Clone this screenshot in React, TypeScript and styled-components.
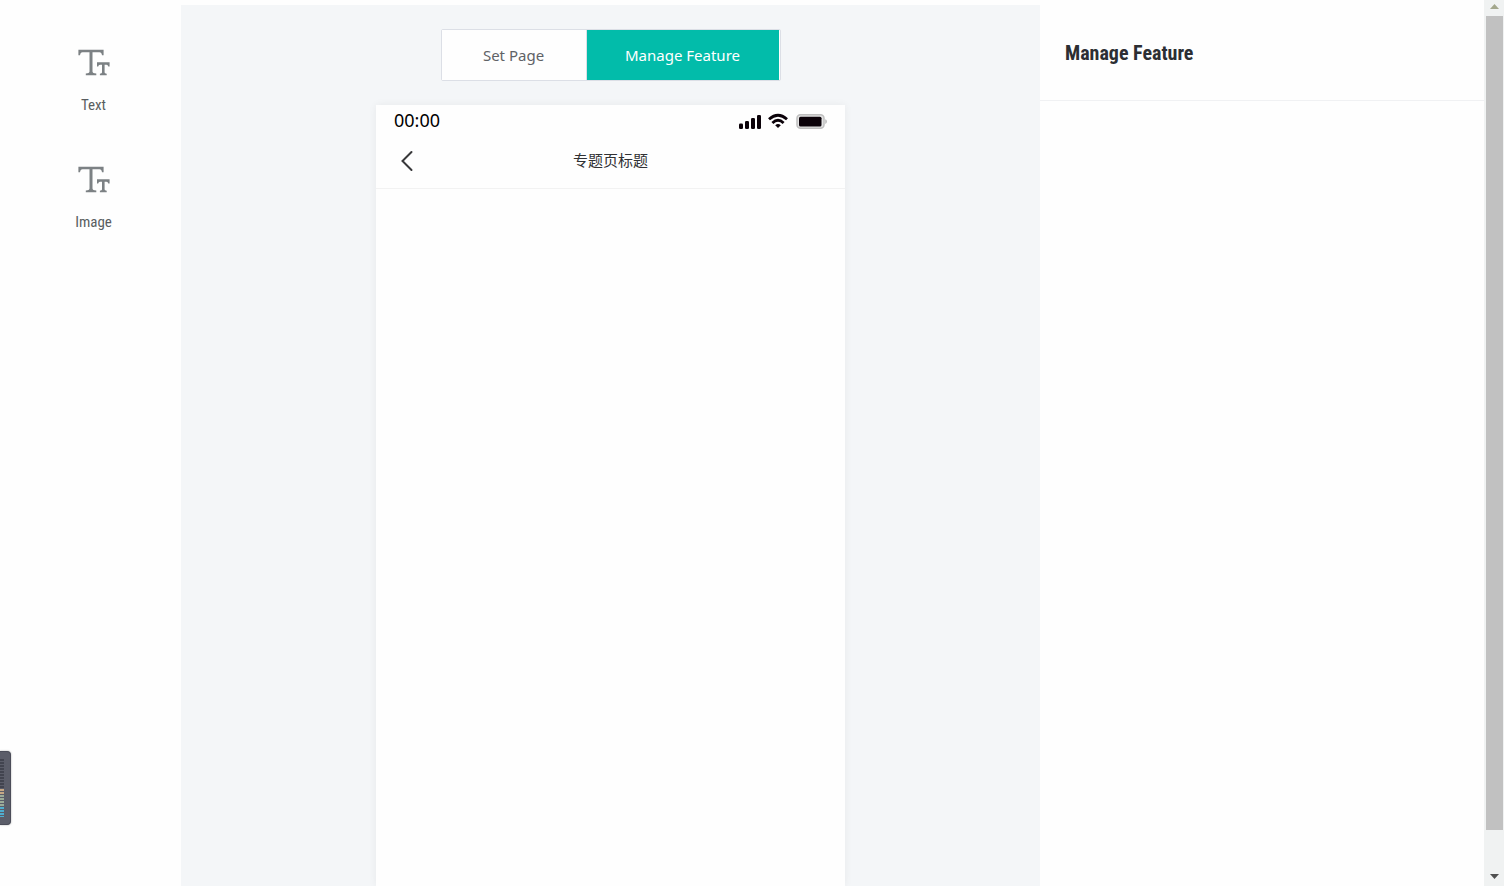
import React from "react";
import styled, { createGlobalStyle } from "styled-components";

const GlobalStyle = createGlobalStyle`
  *, *::before, *::after { box-sizing: border-box; }
  body {
    margin: 0;
    background: #fefefe;
    color: #333;
    font-family: "Noto Sans", "Open Sans", "Noto Sans CJK SC", sans-serif;
  }
  button { font: inherit; border: 0; padding: 0; background: none; cursor: pointer; }
`;

const condensed = `"Roboto Condensed", Roboto, sans-serif`;

const Page = styled.div`
  display: flex;
  height: 100vh;
  overflow: hidden;
`;

const Toolbox = styled.nav`
  flex: 0 0 181px;
  display: flex;
  flex-direction: column;
  align-items: center;
  gap: 50px;
  padding: 48px 0 0 6px;
`;

const Tool = styled.button`
  display: flex;
  flex-direction: column;
  align-items: center;
  gap: 18px;
  width: 48px;
  color: #595d60;
  font-family: ${condensed};
  font-size: 15px;
  line-height: 20px;
`;

const Canvas = styled.main`
  flex: 1;
  display: flex;
  flex-direction: column;
  align-items: center;
  gap: 24px;
  margin-top: 5px;
  padding-top: 24px;
  background: #f4f6f8;
`;

const Tabs = styled.div`
  display: flex;
  height: 52px;
  flex: none;
  padding-right: 1px;
  border: 1px solid #dcdfe6;
  border-radius: 2px;
  background: #fefefe;
`;

const Tab = styled.button<{ $active?: boolean }>`
  width: ${(p) => (p.$active ? 193 : 144)}px;
  border-left: ${(p) => (p.$active ? "1px solid #dcdfe6" : "0")};
  background: ${(p) => (p.$active ? "#02bcaa" : "#fefefe")};
  color: ${(p) => (p.$active ? "#fff" : "#606266")};
  font-size: 15px;
  line-height: 20px;
`;

const Phone = styled.section`
  display: flex;
  flex-direction: column;
  flex: 1;
  width: 469px;
  background: #fefefe;
  box-shadow: 0 0 8px rgba(0, 0, 0, 0.06);
`;

const StatusBar = styled.div`
  display: flex;
  justify-content: space-between;
  align-items: center;
  height: 32px;
  padding: 0 18px;
`;

const Clock = styled.time`
  padding-bottom: 2px;
  color: #000;
  font-size: 18px;
  line-height: 24px;
`;

const PhoneHeader = styled.header`
  display: grid;
  grid-template-columns: 62px 1fr 62px;
  align-items: center;
  height: 52px;
  padding-bottom: 4px;
  border-bottom: 1px solid #f2f2f2;
`;

const BackButton = styled.button`
  display: flex;
  justify-content: center;
`;

const PhoneTitle = styled.h1`
  margin: 0;
  padding-bottom: 2px;
  color: #303133;
  font-family: "Noto Sans CJK SC", sans-serif;
  font-size: 15px;
  font-weight: 400;
  line-height: 20px;
  text-align: center;
`;

const Settings = styled.aside`
  flex: 0 0 444px;
`;

const SettingsTitle = styled.h2`
  margin: 0;
  padding: 40px 25px 34px;
  border-bottom: 1px solid #f0f1f3;
  color: #2c2e33;
  font-family: ${condensed};
  font-size: 20px;
  font-weight: 700;
  line-height: 26px;
`;

const ScrollTrack = styled.div`
  flex: 0 0 20px;
  display: flex;
  flex-direction: column;
  padding: 0 1px 0 2px;
  background: #f0f2f2;
`;

const ScrollArrow = styled.button`
  display: flex;
  justify-content: center;
  align-items: flex-start;
  height: 16px;
  padding-top: 4px;
`;

const ScrollThumb = styled.div`
  flex: 0 1 814px;
  background: #c1c1c1;
`;

const ScrollSpace = styled.div`
  flex: 1 0 36px;
`;

const Meter = styled.div`
  position: fixed;
  left: 0;
  bottom: 61px;
  width: 11px;
  height: 74px;
  border: 1px solid #4b4d59;
  border-left: 0;
  border-radius: 0 4px 4px 0;
  background: #5b5d69;
  box-shadow: 0 0 2px rgba(0, 0, 0, 0.35);
`;

const MeterScale = styled.div`
  padding-top: 7px;
  line-height: 0;
`;

const TextIcon = () => (
  <svg width="32" height="29" viewBox="0 0 32 29" fill="#7c8184" aria-hidden="true">
    <path d="M0.400 1.800H25.600V7.200H24Q23.600 4.200 21.500 4.200H14.500V23.500Q14.500 25.300 18.300 25.500V27.200H7.800V25.500Q11.500 25.300 11.500 23.500V4.200H4.500Q2.400 4.200 2 7.200H0.400Z" />
    <path d="M19 14.200H31.600V18.500H30.300Q30 16.700 28.500 16.700H26.600V24.500Q26.600 25.600 28.700 25.800V27.200H21.900V25.800Q24 25.600 24 24.500V16.700H22Q20.500 16.700 20.200 18.500H19Z" />
  </svg>
);

const StatusIcons = () => (
  <svg width="90" height="18" viewBox="0 0 90 18" aria-hidden="true">
    <g fill="#0b0209">
      <rect x="2" y="11.500" width="4" height="5.500" rx="1.300" />
      <rect x="8" y="9" width="4" height="8" rx="1.300" />
      <rect x="14" y="6" width="4" height="11" rx="1.300" />
      <rect x="20" y="3" width="4" height="14" rx="1.300" />
    </g>
    <g fill="none" stroke="#0b0209" strokeWidth="2.800">
      <path d="M32 7.200Q41 -0.800 50 7.200" />
      <path d="M35.400 11Q41 5.600 46.600 11" />
    </g>
    <path d="M38.200 13.200Q41 11 43.800 13.200L41 16Z" fill="#0b0209" />
    <rect x="60" y="2.800" width="27" height="13.500" rx="3.500" fill="#e4e4e4" stroke="#bebebe" strokeWidth="1.500" />
    <rect x="62" y="4.800" width="22.500" height="9.700" rx="1.500" fill="#0b0209" />
    <path d="M88.200 7.300Q90 7.700 90 9.600T88.200 11.900Z" fill="#bebebe" />
  </svg>
);

const BackIcon = () => (
  <svg width="14" height="22" viewBox="0 0 14 22" fill="none" stroke="#38383a" strokeWidth="2" strokeLinecap="round" aria-hidden="true">
    <path d="M11.500 2L2.500 11L11.500 20" />
  </svg>
);

const MeterBars = () => (
  <svg width="5" height="58" viewBox="0 0 5 58" aria-hidden="true">
    {Array.from({ length: 20 }, (_, i) => (
      <rect key={i} y={i * 3} width="4" height="2" fill={i < 10 ? "#42444f" : i < 12 ? "#c6a784" : i < 16 ? "#9cab98" : "#4faed0"} />
    ))}
  </svg>
);

export default function App() {
  return (
    <>
      <GlobalStyle />
      <Page>
        <Toolbox aria-label="Components">
          {["Text", "Image"].map((label) => (
            <Tool key={label} type="button">
              <TextIcon />
              {label}
            </Tool>
          ))}
        </Toolbox>
        <Canvas>
          <Tabs>
            <Tab type="button">Set Page</Tab>
            <Tab type="button" $active>Manage Feature</Tab>
          </Tabs>
          <Phone>
            <StatusBar>
              <Clock>00:00</Clock>
              <StatusIcons />
            </StatusBar>
            <PhoneHeader>
              <BackButton type="button" aria-label="Back">
                <BackIcon />
              </BackButton>
              <PhoneTitle>专题页标题</PhoneTitle>
            </PhoneHeader>
          </Phone>
        </Canvas>
        <Settings>
          <SettingsTitle>Manage Feature</SettingsTitle>
        </Settings>
        <ScrollTrack>
          <ScrollArrow type="button" aria-label="Scroll up">
            <svg width="9" height="5" viewBox="0 0 9 5" aria-hidden="true"><path d="M0 5L4.500 0L9 5Z" fill="#a3a78c" /></svg>
          </ScrollArrow>
          <ScrollThumb />
          <ScrollSpace />
          <ScrollArrow type="button" aria-label="Scroll down">
            <svg width="9" height="5" viewBox="0 0 9 5" aria-hidden="true"><path d="M0 0L4.500 5L9 0Z" fill="#505050" /></svg>
          </ScrollArrow>
        </ScrollTrack>
      </Page>
      <Meter>
        <MeterScale>
          <MeterBars />
        </MeterScale>
      </Meter>
    </>
  );
}
